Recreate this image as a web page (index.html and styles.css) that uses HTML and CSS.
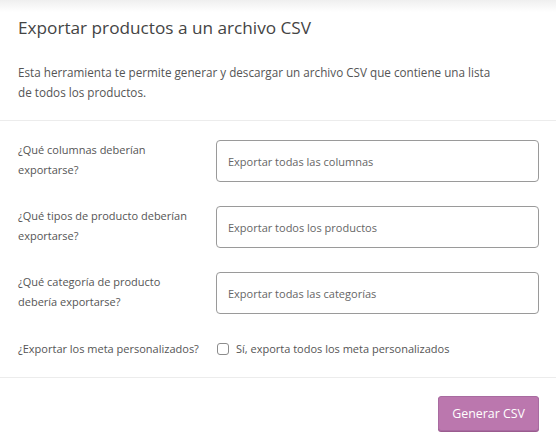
FILE: index.html
```html
<!DOCTYPE html>
<html lang="es">
<head>
  <meta charset="UTF-8">
  <meta name="viewport" content="width=device-width, initial-scale=1.0">
  <title>Exportar productos</title>
  <link rel="stylesheet" href="styles.css">
</head>
<body>
  <div class="exporter">
    <header class="exporter-head">
      <h2>Exportar productos a un archivo CSV</h2>
      <p>Esta herramienta te permite generar y descargar un archivo CSV que contiene una lista de todos los productos.</p>
    </header>
    <section class="exporter-fields">
      <div class="field-row">
        <label class="field-label">¿Qué columnas deberían<br>exportarse?</label>
        <div class="select-box">Exportar todas las columnas</div>
      </div>
      <div class="field-row">
        <label class="field-label">¿Qué tipos de producto deberían<br>exportarse?</label>
        <div class="select-box">Exportar todos los productos</div>
      </div>
      <div class="field-row">
        <label class="field-label">¿Qué categoría de producto<br>debería exportarse?</label>
        <div class="select-box">Exportar todas las categorías</div>
      </div>
      <div class="field-row field-row--check">
        <label class="field-label">¿Exportar los meta personalizados?</label>
        <label class="check-option">
          <input type="checkbox" id="exportMeta">
          <span>Sí, exporta todos los meta personalizados</span>
        </label>
      </div>
    </section>
    <footer class="exporter-actions">
      <button type="button" id="btnGenerate">Generar CSV</button>
    </footer>
  </div>
</body>
</html>
```

FILE: styles.css
```css
body {
  margin: 0;
  font-family: "Open Sans", "Noto Sans", sans-serif;
  color: #555;
  background: linear-gradient(#efefef, #fff 12px) no-repeat;
  background-color: #fff;
}
.exporter {
  width: 556px;
}
.exporter-head {
  padding: 14px 17px 18px 18px;
  border-bottom: 1px solid #ececec;
}
.exporter-head h2 {
  margin: 0 0 20px;
  font-size: 17.2px;
  font-weight: 400;
  line-height: 28px;
  color: #444;
}
.exporter-head p {
  margin: 0;
  max-width: 482px;
  font-size: 11.7px;
  line-height: 20px;
}
.exporter-fields {
  padding: 19px 17px 17px 18px;
  border-bottom: 1px solid #ececec;
  display: flex;
  flex-direction: column;
  gap: 24px;
}
.field-row {
  display: grid;
  grid-template-columns: 198px 1fr;
  align-items: start;
}
.field-row--check {
  align-items: center;
}
.field-label {
  font-size: 11px;
  line-height: 20px;
  white-space: nowrap;
}
.select-box {
  height: 40px;
  border: 1px solid #9a9a9a;
  border-radius: 4px;
  padding: 0 11px;
  display: flex;
  align-items: center;
  font-size: 11px;
  color: #666;
}
.check-option {
  display: flex;
  align-items: center;
  gap: 7px;
  font-size: 11px;
  line-height: 22px;
}
.check-option input {
  appearance: none;
  margin: 0 0 0 1px;
  width: 12px;
  height: 12px;
  border: 1px solid #8c8c8c;
  border-radius: 3px;
  background: #fff;
}
.exporter-actions {
  padding: 18px 17px 18px;
  display: flex;
  justify-content: flex-end;
}
#btnGenerate {
  height: 35px;
  padding: 0 13px;
  border: 1px solid #a86ba0;
  border-radius: 3px;
  background-color: #bb77ae;
  color: #fff;
  font-family: inherit;
  font-size: 12.4px;
  box-shadow: 0 1px 0 #9b5b8f;
  cursor: pointer;
}
```
